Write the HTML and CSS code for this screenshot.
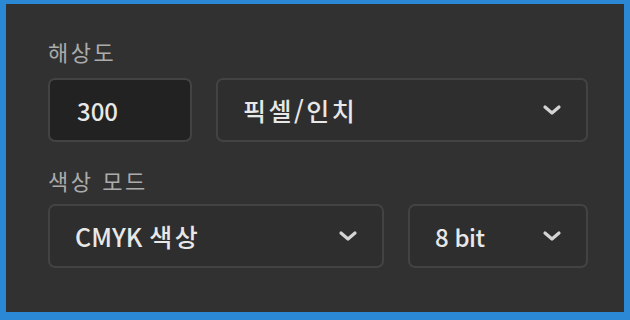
FILE: index.html
```html
<!DOCTYPE html>
<html lang="ko">
<head>
<meta charset="utf-8">
<link rel="stylesheet" href="styles.css">
</head>
<body>
<div class="frame">
  <div class="panel">
    <div class="label">해상도</div>
    <div class="row">
      <div class="field input w-res">300</div>
      <div class="field select w-unit"><span class="ko">픽셀/인치</span><svg class="chev" viewBox="0 0 20 12"><path d="M3 3 L10 9 L17 3"/></svg></div>
    </div>
    <div class="label label2">색상 모드</div>
    <div class="row">
      <div class="field select w-mode"><span>CMYK <span class="ko">색상</span></span><svg class="chev" viewBox="0 0 20 12"><path d="M3 3 L10 9 L17 3"/></svg></div>
      <div class="field select w-bit"><span class="latin">8 bit</span><svg class="chev" viewBox="0 0 20 12"><path d="M3 3 L10 9 L17 3"/></svg></div>
    </div>
  </div>
</div>
</body>
</html>
```

FILE: styles.css
```css
html, body {
  margin: 0;
  padding: 0;
}
body {
  width: 630px;
  height: 320px;
  background: #2a88d4;
  font-family: "Noto Sans CJK KR", "Noto Sans", sans-serif;
}
.frame {
  box-sizing: border-box;
  width: 630px;
  height: 320px;
  padding: 4px 6px 8px 6px;
}
.panel {
  box-sizing: border-box;
  height: 100%;
  background: #313131;
  padding: 33px 36px 0 42px;
}
.label {
  height: 28px;
  line-height: 28px;
  font-size: 22px;
  letter-spacing: 2.5px;
  color: #ababab;
  margin-bottom: 13px;
}
.label2 {
  margin-top: 24px;
  margin-bottom: 10px;
}
.row {
  display: flex;
  gap: 24px;
}
.field {
  box-sizing: border-box;
  height: 64px;
  border: 2px solid #434343;
  border-radius: 7px;
  display: flex;
  align-items: center;
  padding: 0 24px 0 25px;
  font-size: 25px;
  font-weight: 500;
  color: #e8e8e8;
}
.ko {
  letter-spacing: 2.5px;
}
.latin {
  font-size: 24px;
  letter-spacing: -0.5px;
}
.input {
  background: #222222;
  padding-left: 27px;
  font-size: 24px;
}
.select {
  background: #2e2e2e;
  justify-content: space-between;
}
.w-res { width: 144px; }
.w-unit { width: 372px; }
.w-mode { width: 336px; }
.w-bit { width: 180px; }
.chev {
  width: 20px;
  height: 12px;
}
.chev path {
  fill: none;
  stroke: #d4d4d4;
  stroke-width: 3.2;
  stroke-linecap: round;
  stroke-linejoin: round;
}
```
